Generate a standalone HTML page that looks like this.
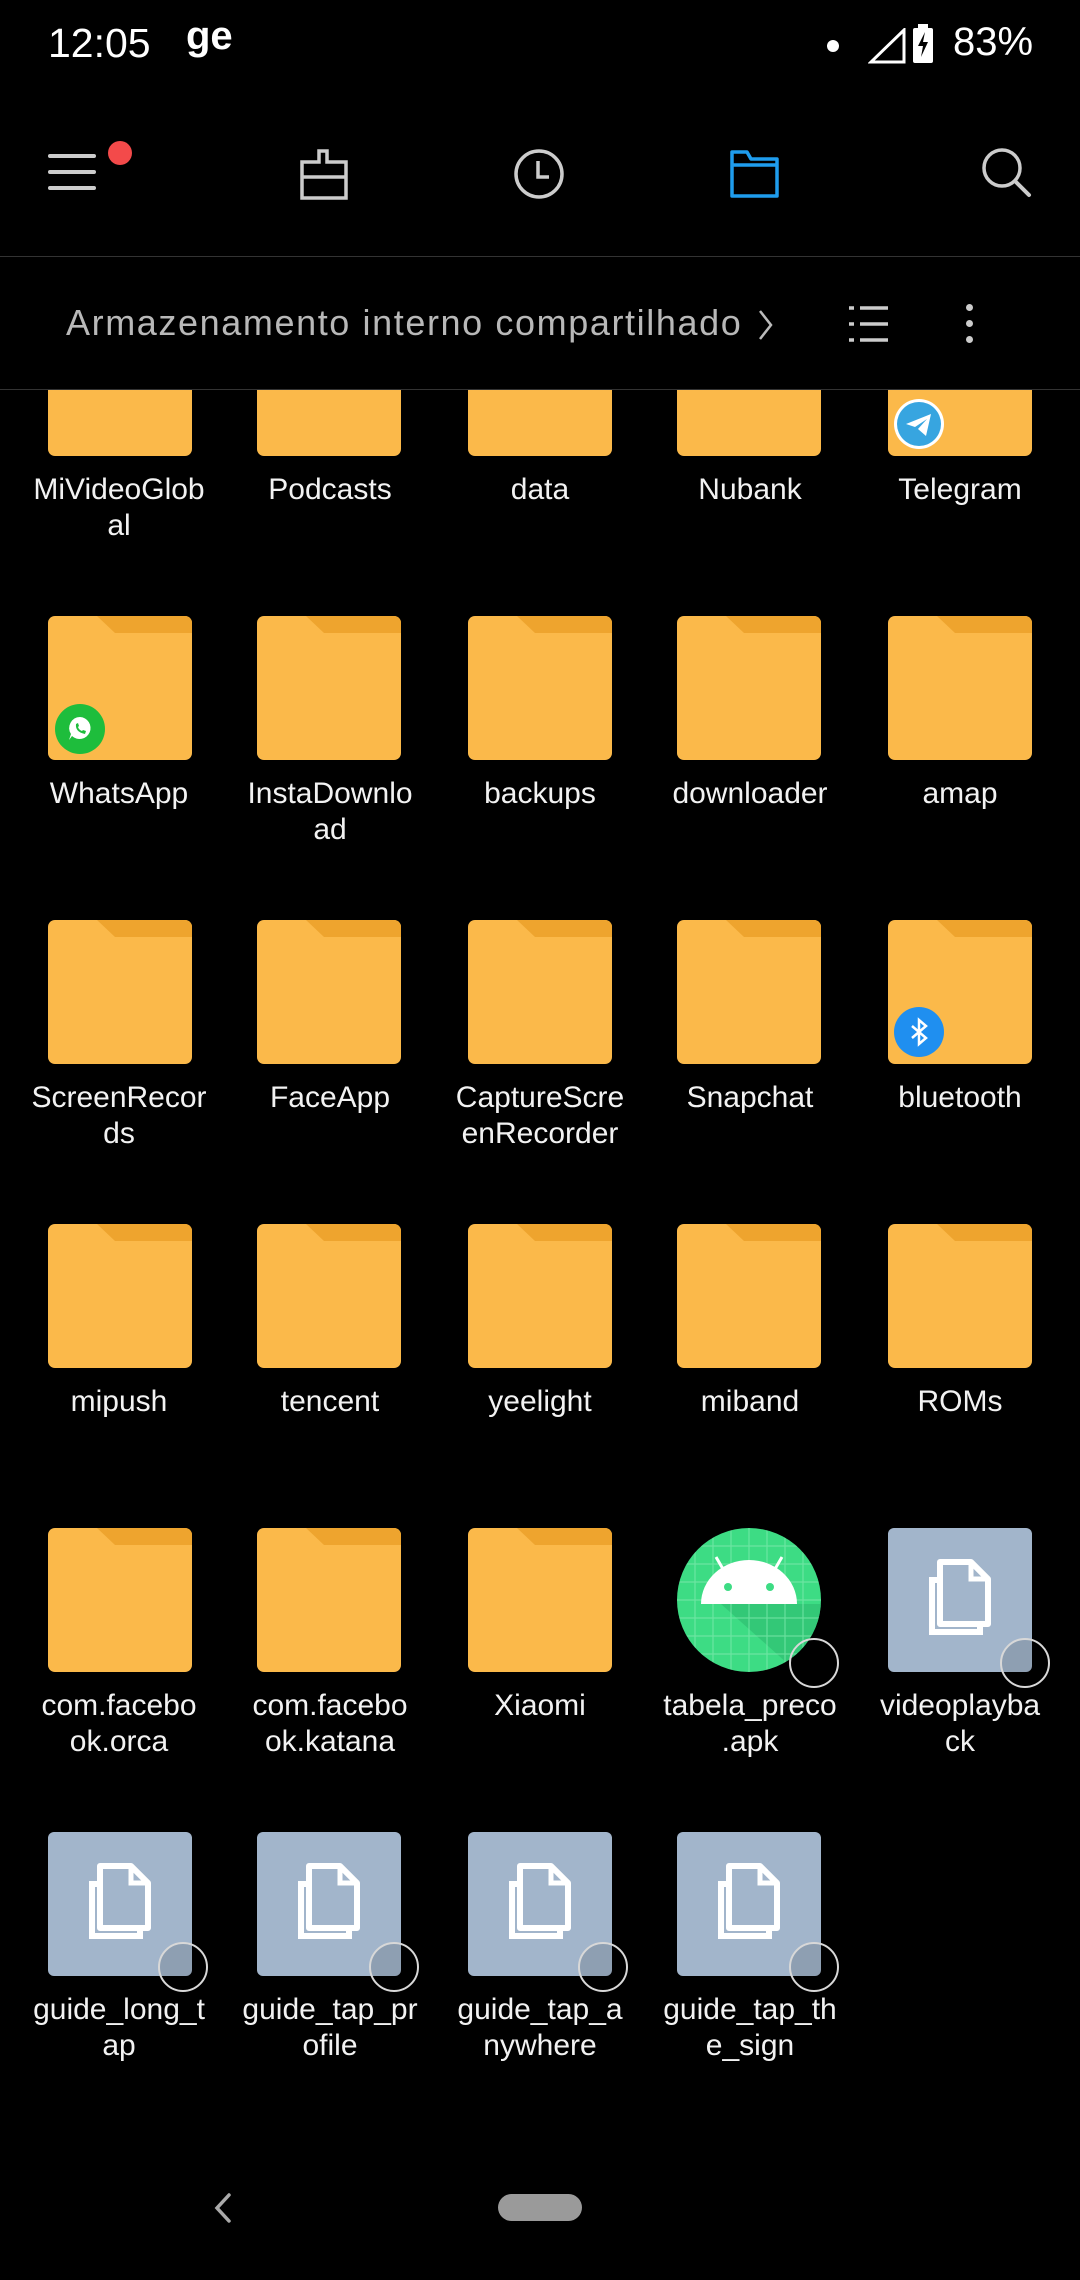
<!DOCTYPE html>
<html><head><meta charset="utf-8"><style>
*{margin:0;padding:0;box-sizing:border-box}
body{width:1080px;height:2280px;background:#000;position:relative;overflow:hidden;font-family:"Liberation Sans",sans-serif;color:#fff}
.abs{position:absolute}
.lbl{position:absolute;width:200px;text-align:center;font-size:30px;line-height:36px;color:#f2f2f2}
.sel{position:absolute;width:50px;height:50px;border-radius:50%;border:2px solid #d8d8d8}
</style></head><body>
<!-- status bar -->
<div class="abs" style="left:48px;top:20px;font-size:41px;color:#fff">12:05</div>
<div class="abs" style="left:186px;top:14px;font-size:40px;font-weight:bold;color:#fff">ge</div>
<div class="abs" style="left:827px;top:40px;width:12px;height:12px;border-radius:50%;background:#fff"></div>
<svg class="abs" style="left:868px;top:28px" width="40" height="36" viewBox="0 0 40 36"><path d="M36 2 L36 34 L3 34 Z" fill="none" stroke="#fff" stroke-width="3"/></svg>
<svg class="abs" style="left:912px;top:24px" width="22" height="40" viewBox="0 0 22 40"><rect x="6" y="0" width="10" height="4" fill="#fff"/><rect x="1" y="4" width="20" height="35" rx="2" fill="#fff"/><path d="M13 8 L6 22 L11 22 L9 33 L16 18 L11 18 Z" fill="#000"/></svg>
<div class="abs" style="left:953px;top:20px;font-size:40px;color:#fff">83%</div>
<!-- toolbar -->
<svg class="abs" style="left:46px;top:150px" width="52" height="46" viewBox="0 0 52 46"><g stroke="#ccc" stroke-width="4" stroke-linecap="round"><line x1="4" y1="6" x2="48" y2="6"/><line x1="4" y1="22" x2="48" y2="22"/><line x1="4" y1="38" x2="48" y2="38"/></g></svg>
<div class="abs" style="left:108px;top:141px;width:24px;height:24px;border-radius:50%;background:#f34a4a"></div>
<svg class="abs" style="left:298px;top:148px" width="52" height="52" viewBox="0 0 52 52"><path d="M21 3 H29 V14 H48 V50 H4 V14 H21 Z M4 29 H48" fill="none" stroke="#ccc" stroke-width="3.5"/></svg>
<svg class="abs" style="left:513px;top:148px" width="52" height="52" viewBox="0 0 52 52"><circle cx="26" cy="26" r="23" fill="none" stroke="#ccc" stroke-width="3.5"/><path d="M25 13 V29 H36" fill="none" stroke="#ccc" stroke-width="3.5"/></svg>
<svg class="abs" style="left:729px;top:148px" width="52" height="52" viewBox="0 0 52 52"><path d="M3 4 H18 L22 11 H48 V48 H3 Z M3 17 H48" fill="none" stroke="#1f9dee" stroke-width="3.5" stroke-linejoin="round"/></svg>
<svg class="abs" style="left:980px;top:146px" width="54" height="54" viewBox="0 0 54 54"><circle cx="22" cy="22" r="18" fill="none" stroke="#ccc" stroke-width="3.5"/><line x1="35" y1="35" x2="49" y2="49" stroke="#ccc" stroke-width="4" stroke-linecap="round"/></svg>
<div class="abs" style="left:0;top:256px;width:1080px;height:1px;background:#333"></div>
<!-- breadcrumb -->
<div class="abs" style="left:66px;top:302px;font-size:36px;letter-spacing:1.6px;color:#b8b8b8;white-space:nowrap">Armazenamento interno compartilhado</div>
<svg class="abs" style="left:757px;top:308px" width="18" height="34" viewBox="0 0 18 34"><path d="M3 3 L14 17 L3 31" fill="none" stroke="#bbb" stroke-width="2.5"/></svg>
<svg class="abs" style="left:848px;top:304px" width="42" height="40" viewBox="0 0 42 40"><g stroke="#ccc" stroke-width="3.5"><line x1="1" y1="4" x2="6" y2="4"/><line x1="12" y1="4" x2="40" y2="4"/><line x1="1" y1="20" x2="6" y2="20"/><line x1="12" y1="20" x2="40" y2="20"/><line x1="1" y1="36" x2="6" y2="36"/><line x1="12" y1="36" x2="40" y2="36"/></g></svg>
<div class="abs" style="left:966px;top:304px;width:7px;height:7px;border-radius:50%;background:#ccc"></div>
<div class="abs" style="left:966px;top:320px;width:7px;height:7px;border-radius:50%;background:#ccc"></div>
<div class="abs" style="left:966px;top:336px;width:7px;height:7px;border-radius:50%;background:#ccc"></div>
<div class="abs" style="left:0;top:389px;width:1080px;height:1px;background:#333"></div>

<svg width="0" height="0" style="position:absolute"><defs>
<symbol id="fold" viewBox="0 0 144 144"><rect width="144" height="144" rx="7" fill="#fbb94a"/><path d="M49 0 H137 A7 7 0 0 1 144 7 V17 H67 Z" fill="#eea42e"/></symbol>
<symbol id="file" viewBox="0 0 144 144"><rect width="144" height="144" rx="6" fill="#a2b5cb"/><path d="M52 52 H44 V104 H92 V96" fill="none" stroke="#fff" stroke-width="6"/><path d="M52 34 H83 L100 51 V96 H52 Z" fill="none" stroke="#fff" stroke-width="6" stroke-linejoin="round"/><path d="M83 34 V51 H100" fill="none" stroke="#fff" stroke-width="5"/></symbol>
</defs></svg>

<div class="abs" style="left:0;top:390px;width:1080px;height:1800px;overflow:hidden">
<div style="position:absolute;left:0;top:-390px;width:1080px;height:2280px">
<svg class="abs" style="left:48px;top:312px" width="144" height="144"><use href="#fold"/></svg>
<svg class="abs" style="left:257px;top:312px" width="144" height="144"><use href="#fold"/></svg>
<svg class="abs" style="left:468px;top:312px" width="144" height="144"><use href="#fold"/></svg>
<svg class="abs" style="left:677px;top:312px" width="144" height="144"><use href="#fold"/></svg>
<svg class="abs" style="left:888px;top:312px" width="144" height="144"><use href="#fold"/></svg>
<svg class="abs" style="left:893px;top:398px" width="52" height="52" viewBox="0 0 52 52"><circle cx="26" cy="26" r="25" fill="#fff"/><circle cx="26" cy="26" r="22" fill="#37a5e0"/><path d="M13 26 L38 16 L33 38 L25 31 L34 21 L22 29 Z" fill="#fff"/></svg>
</div></div>
<div class="lbl" style="left:19px;top:472px">MiVideoGlob<br>al</div>
<div class="lbl" style="left:230px;top:472px">Podcasts</div>
<div class="lbl" style="left:440px;top:472px">data</div>
<div class="lbl" style="left:650px;top:472px">Nubank</div>
<div class="lbl" style="left:860px;top:472px">Telegram</div>

<svg class="abs" style="left:48px;top:616px" width="144" height="144"><use href="#fold"/></svg>
<svg class="abs" style="left:257px;top:616px" width="144" height="144"><use href="#fold"/></svg>
<svg class="abs" style="left:468px;top:616px" width="144" height="144"><use href="#fold"/></svg>
<svg class="abs" style="left:677px;top:616px" width="144" height="144"><use href="#fold"/></svg>
<svg class="abs" style="left:888px;top:616px" width="144" height="144"><use href="#fold"/></svg>
<svg class="abs" style="left:54px;top:703px" width="52" height="52" viewBox="0 0 52 52"><circle cx="26" cy="26" r="25" fill="#1ebd3c"/><path d="M26 14 A11 11 0 1 1 18 33 L15 37 L17 31 A11 11 0 0 1 26 14 Z" fill="#fff"/><path d="M22 21 Q21 29 31 31 L32 28 L29 27 L28 28 Q25 27 24 24 L25 23 L24 20 Z" fill="#1ebd3c"/></svg>
<div class="lbl" style="left:19px;top:776px">WhatsApp</div>
<div class="lbl" style="left:230px;top:776px">InstaDownlo<br>ad</div>
<div class="lbl" style="left:440px;top:776px">backups</div>
<div class="lbl" style="left:650px;top:776px">downloader</div>
<div class="lbl" style="left:860px;top:776px">amap</div>

<svg class="abs" style="left:48px;top:920px" width="144" height="144"><use href="#fold"/></svg>
<svg class="abs" style="left:257px;top:920px" width="144" height="144"><use href="#fold"/></svg>
<svg class="abs" style="left:468px;top:920px" width="144" height="144"><use href="#fold"/></svg>
<svg class="abs" style="left:677px;top:920px" width="144" height="144"><use href="#fold"/></svg>
<svg class="abs" style="left:888px;top:920px" width="144" height="144"><use href="#fold"/></svg>
<svg class="abs" style="left:893px;top:1006px" width="52" height="52" viewBox="0 0 52 52"><circle cx="26" cy="26" r="25" fill="#1f8ff0"/><path d="M19 20 L33 32 L26 38 V14 L33 20 L19 32" fill="none" stroke="#fff" stroke-width="2.5"/></svg>
<div class="lbl" style="left:19px;top:1080px">ScreenRecor<br>ds</div>
<div class="lbl" style="left:230px;top:1080px">FaceApp</div>
<div class="lbl" style="left:440px;top:1080px">CaptureScre<br>enRecorder</div>
<div class="lbl" style="left:650px;top:1080px">Snapchat</div>
<div class="lbl" style="left:860px;top:1080px">bluetooth</div>

<svg class="abs" style="left:48px;top:1224px" width="144" height="144"><use href="#fold"/></svg>
<svg class="abs" style="left:257px;top:1224px" width="144" height="144"><use href="#fold"/></svg>
<svg class="abs" style="left:468px;top:1224px" width="144" height="144"><use href="#fold"/></svg>
<svg class="abs" style="left:677px;top:1224px" width="144" height="144"><use href="#fold"/></svg>
<svg class="abs" style="left:888px;top:1224px" width="144" height="144"><use href="#fold"/></svg>
<div class="lbl" style="left:19px;top:1384px">mipush</div>
<div class="lbl" style="left:230px;top:1384px">tencent</div>
<div class="lbl" style="left:440px;top:1384px">yeelight</div>
<div class="lbl" style="left:650px;top:1384px">miband</div>
<div class="lbl" style="left:860px;top:1384px">ROMs</div>

<svg class="abs" style="left:48px;top:1528px" width="144" height="144"><use href="#fold"/></svg>
<svg class="abs" style="left:257px;top:1528px" width="144" height="144"><use href="#fold"/></svg>
<svg class="abs" style="left:468px;top:1528px" width="144" height="144"><use href="#fold"/></svg>
<svg class="abs" style="left:677px;top:1528px" width="144" height="144" viewBox="0 0 144 144"><defs><clipPath id="cc"><circle cx="72" cy="72" r="72"/></clipPath></defs><circle cx="72" cy="72" r="72" fill="#3ddc84"/><g clip-path="url(#cc)"><path d="M44 76 L120 144 L144 144 L144 76 Z" fill="#2fbf72" opacity=".7"/><g stroke="#7fe8ae" stroke-width="1.2" opacity=".7"><line x1="18" y1="0" x2="18" y2="144"/><line x1="36" y1="0" x2="36" y2="144"/><line x1="54" y1="0" x2="54" y2="144"/><line x1="72" y1="0" x2="72" y2="144"/><line x1="90" y1="0" x2="90" y2="144"/><line x1="108" y1="0" x2="108" y2="144"/><line x1="126" y1="0" x2="126" y2="144"/><line y1="18" x1="0" y2="18" x2="144"/><line y1="36" x1="0" y2="36" x2="144"/><line y1="54" x1="0" y2="54" x2="144"/><line y1="72" x1="0" y2="72" x2="144"/><line y1="90" x1="0" y2="90" x2="144"/><line y1="108" x1="0" y2="108" x2="144"/><line y1="126" x1="0" y2="126" x2="144"/></g></g><path d="M24 76 A48 44 0 0 1 120 76 Z" fill="#fff"/><line x1="46" y1="41" x2="39" y2="29" stroke="#fff" stroke-width="3"/><line x1="98" y1="41" x2="105" y2="29" stroke="#fff" stroke-width="3"/><circle cx="51" cy="59" r="4" fill="#3ddc84"/><circle cx="93" cy="59" r="4" fill="#3ddc84"/></svg>
<svg class="abs" style="left:888px;top:1528px" width="144" height="144"><use href="#file"/></svg>
<div class="sel" style="left:789px;top:1638px"></div>
<div class="sel" style="left:1000px;top:1638px;background:rgba(0,0,0,.12)"></div>
<div class="lbl" style="left:19px;top:1688px">com.facebo<br>ok.orca</div>
<div class="lbl" style="left:230px;top:1688px">com.facebo<br>ok.katana</div>
<div class="lbl" style="left:440px;top:1688px">Xiaomi</div>
<div class="lbl" style="left:650px;top:1688px">tabela_preco<br>.apk</div>
<div class="lbl" style="left:860px;top:1688px">videoplayba<br>ck</div>

<svg class="abs" style="left:48px;top:1832px" width="144" height="144"><use href="#file"/></svg>
<svg class="abs" style="left:257px;top:1832px" width="144" height="144"><use href="#file"/></svg>
<svg class="abs" style="left:468px;top:1832px" width="144" height="144"><use href="#file"/></svg>
<svg class="abs" style="left:677px;top:1832px" width="144" height="144"><use href="#file"/></svg>
<div class="sel" style="left:158px;top:1942px;background:rgba(0,0,0,.12)"></div>
<div class="sel" style="left:369px;top:1942px;background:rgba(0,0,0,.12)"></div>
<div class="sel" style="left:578px;top:1942px;background:rgba(0,0,0,.12)"></div>
<div class="sel" style="left:789px;top:1942px;background:rgba(0,0,0,.12)"></div>
<div class="lbl" style="left:19px;top:1992px">guide_long_t<br>ap</div>
<div class="lbl" style="left:230px;top:1992px">guide_tap_pr<br>ofile</div>
<div class="lbl" style="left:440px;top:1992px">guide_tap_a<br>nywhere</div>
<div class="lbl" style="left:650px;top:1992px">guide_tap_th<br>e_sign</div>

<svg class="abs" style="left:212px;top:2192px" width="22" height="32" viewBox="0 0 22 32"><path d="M17 3 L5 16 L17 29" fill="none" stroke="#aaa" stroke-width="3.5" stroke-linecap="round"/></svg>
<div class="abs" style="left:498px;top:2194px;width:84px;height:27px;border-radius:14px;background:#9a9a9a"></div>
</body></html>
